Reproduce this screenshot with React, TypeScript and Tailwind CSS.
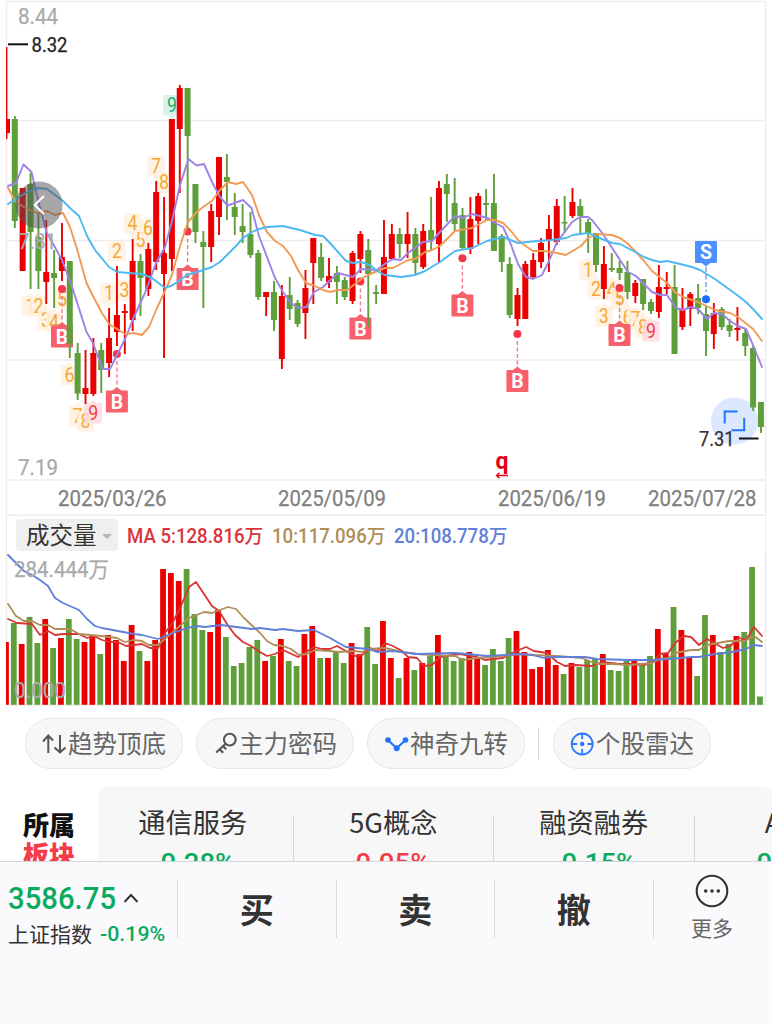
import React from "react";

type Candle = ["r" | "g", number, number, number, number];

// colour, high, low, body top, body bottom
const CANDLES: Candle[] = [
  ["r", 47, 139, 119, 133], ["g", 116, 228, 119, 221], ["r", 188, 271, 188, 271], ["g", 173, 289, 184, 232],
  ["g", 212, 289, 237, 271], ["r", 220, 304, 272, 282], ["g", 250, 308, 273, 278], ["r", 223, 281, 257, 271],
  ["g", 261, 358, 261, 344], ["g", 343, 400, 353, 393.5], ["r", 350, 404, 388, 394], ["r", 338, 396, 353, 394],
  ["g", 343, 393, 350, 370], ["r", 308, 377, 338, 363], ["r", 266, 346, 315, 332], ["r", 304, 354, 311, 313],
  ["r", 239, 331, 261, 320], ["g", 254, 316, 261, 278], ["r", 243, 296, 249, 289], ["r", 181, 270, 192, 262],
  ["r", 197, 358, 253, 274], ["r", 119, 271, 119, 259], ["r", 85, 193, 88, 129], ["g", 88, 230, 88, 136],
  ["g", 184, 243, 184, 232], ["g", 231, 308, 242, 247], ["r", 204, 262, 211, 247], ["r", 157, 235, 157, 217],
  ["g", 154, 220, 177, 182], ["g", 193, 235, 207, 217], ["g", 204, 243, 226, 232], ["g", 212, 258, 234, 255],
  ["g", 250, 300, 253, 297], ["r", 292, 316, 292, 297], ["g", 281, 331, 292, 320], ["r", 285, 369, 296, 359],
  ["g", 277, 320, 295, 309], ["g", 300, 327, 303, 324], ["r", 270, 339, 288, 313], ["r", 238, 304, 238, 263],
  ["g", 243, 281, 257, 278], ["r", 258, 288, 276, 282], ["g", 266, 304, 273, 282], ["g", 277, 300, 280, 297],
  ["r", 251, 304, 253, 301], ["r", 231, 273, 234, 259], ["g", 239, 327, 250, 274], ["g", 285, 304, 292, 294],
  ["r", 220, 294, 257, 294], ["r", 224, 260, 234, 259], ["g", 228, 258, 234, 244], ["r", 212, 258, 234, 244],
  ["g", 228, 274, 234, 263], ["r", 224, 269, 231, 267], ["g", 197, 250, 230, 240], ["r", 181, 263, 188, 244],
  ["g", 174, 222, 184, 194], ["g", 178, 231, 203, 224], ["g", 208, 250, 215, 248], ["r", 197, 254, 219, 249],
  ["r", 193, 244, 196, 221], ["g", 189, 220, 203, 205], ["g", 174, 251, 203, 251], ["g", 234, 272, 236, 262],
  ["g", 257, 318, 264, 315], ["r", 288, 326, 295, 319], ["r", 261, 319, 264, 319], ["r", 253, 278, 260, 277],
  ["r", 238, 268, 243, 262], ["r", 215, 272, 229, 241], ["r", 199, 245, 206, 242], ["g", 196, 233, 222, 223.5],
  ["r", 188, 218, 202, 216], ["g", 199, 233, 206, 216], ["g", 219, 253, 222, 234], ["g", 233, 272, 233, 265],
  ["r", 246, 299, 264, 289], ["g", 253, 272, 268, 270], ["g", 261, 280, 268, 273], ["g", 261, 299, 272, 292],
  ["r", 280, 303, 283, 296], ["g", 279, 310, 279, 304], ["g", 299, 314, 302, 311], ["r", 265, 318, 287, 312],
  ["r", 272, 294, 287, 289], ["g", 265, 354, 287, 354], ["r", 288, 330, 309, 327], ["r", 292, 326, 294, 309],
  ["g", 284, 314, 298, 308], ["g", 305, 356, 314, 331], ["r", 303, 349, 313, 334], ["g", 307, 330, 309, 327],
  ["g", 319, 337, 325, 331], ["r", 307, 341, 328, 330], ["g", 329, 356, 333, 346], ["g", 345, 411, 348, 407.5],
  ["g", 402, 433, 402, 427],
];

const VOLUME_TOPS = [
  642, 623, 644, 617, 643, 619, 648, 638, 619, 639, 642, 636, 654, 635, 640, 661, 625, 651, 661, 640, 569, 573, 581,
  569, 614, 630, 632, 610, 637, 666, 663, 647, 640, 661, 656, 639, 661, 666, 634, 626, 658, 658, 652, 663, 643, 654,
  627, 664, 621, 658, 678, 658, 670, 663, 656, 635, 657, 661, 658, 652, 658, 665, 649, 661, 638, 631, 652, 669, 667,
  650, 665, 674, 663, 667, 660, 659, 654, 670, 671, 661, 661, 663, 656, 629, 653, 607, 630, 658, 676, 615, 635, 652,
  644, 636, 632, 567, 696.5,
];
const VOLUME_RED = new Set([
  0, 2, 5, 7, 10, 11, 13, 14, 15, 16, 18, 19, 20, 21, 22, 26, 27, 33, 35, 38, 39, 41, 44, 45, 48, 49, 51, 53, 55, 59,
  60, 65, 66, 67, 68, 69, 70, 72, 76, 80, 83, 84, 86, 87, 90, 93,
]);

const MA_SHORT =
  "8,186 16,183 23.5,164.5 31.5,172 38,200 46.5,232 62,260 71.5,285 86.5,332 93,343 102.5,369 110,369 117,355 126,337 133,319 145,293 156,263 165,247 172,221 180,185 188.5,159 196.5,165.5 204,164 212,182 220,197 227.5,205.5 243,200 251.5,208 259,236 275,278 283,292 291,303 298,308 306.5,307 314,292 323,287 338,273 353,277 361,269 377,270 386,263 393,259 401,260 408,253 423,242 432,241 440,232 455,216 463,218 472,214 480,216 488,218 495,223 503,227 510,242 518,264 526,277 533,279 542,275 549,261 557,242 564,233 572,222 580,217 588,217 592,220 603,234 620,260 628,272 636,276 652,292 660,295 667,295 676,308 683,310 691,307 698,309 707,319 714,313 722,314 730,321 738,326 746,329 753,345 762,367";
const MA_MID =
  "8,188 16,202 24,207 38,213.5 47,211 55,215 63,213 70,227 77,249 86.5,283 94,298 102,313 109,324 125,334 134,333 142,335 149,327 157,308 164,293 172,275 180,246 188,222 197,212 203,207 212,201 220,190 228,182 236,184 243,182 252,195 259,215 267,232 275,241 283,246 291,256 298,270 306,283 315,286 323,290 330,292 338,290 347,290 355,284 361,279 370,274 385,268 393,268 408,260 415,259 425,252 432,250 440,246 455,231 472,228 487,220 495,220 503,223 511,231 518,240 527,247 533,251 543,251 552,252 566,255 581,246 588,238 597,234 612,235 620,238 627,243 637,253 644,261 652,271 667,283 676,293 683,297 698,302 715,310 730,313 738,317 753,329 762,341";
const MA_LONG =
  "8,204 16,199 24,194 32,190 39,188 47,189 55,195 63,201 71,209 79,216 87,236 95,250 109,267 117,272 142,274 152,278 165,288 173,285 187,275 200,271 212,267 220,262 228,254 236,246 243,238 252,232 259,229 267,227 283,226 300,230 315,235 323,236 330,243 346,261 353,263 361,262 370,265 377,271 385,275 401,277 415,275 425,271 440,262 455,251 472,248 487,241 503,237 518,243 527,242 537,241 552,240 566,238 573,235 588,233 597,237 612,243 620,244 637,253 644,257 652,260 660,262 667,261 676,263 692,267 700,270 715,279 737,295 746,302 753,309 762,319";

const VOL_MA5 =
  "8,619 17,623 32,624 40,635 48,631 55,635 63,634 79,634 87,638 94,636 102,640 110,642 118,642 126,646 142,644 150,648 158,648 165,633 173,622 181,606 189,587 196,582 204,594 212,606 219,611 227,624 235,635 243,642 251,646 260,652 267,656 275,654 283,650 298,657 314,647 322,649 330,649 337,646 355,656 362,655 370,648 377,651 385,643 393,646 402,651 408,657 417,658 424,666 432,665 440,657 460,654 477,657 485,660 493,659 503,658 512,653 519,650 526,647 534,651 547,653 557,662 565,666 575,665 592,666 602,662 619,664 632,664 645,665 654,661 660,654 668,653 675,643 684,636 691,637 699,645 707,639 723,648 730,646 739,638 746,640 754,627 762,636";
const VOL_MA10 =
  "8,604 16,616 24,621 32,621 40,625 48,625 55,629 70,629 79,634 102,636 117,638 125,642 133,640 142,641 149,645 158,645 166,638 173,632 182,624 189,618 204,612 212,613 228,607 236,609 244,618 260,633 267,641 274,645 283,646 291,649 299,655 307,654 315,650 330,651 338,652 354,651 362,652 368,649 385,648 402,652 417,654 432,655 455,656 463,660 477,658 493,657 520,654 534,655 557,656 582,658 597,664 612,664 630,665 652,663 660,659 669,658 675,653 691,650 699,650 707,645 729,641 745,641 754,636 762,642";
const VOL_MA20 =
  "8,555 15,562 24,571 32,575 40,580 48,586 55,598 63,603 79,610 87,619 95,626 102,628 118,631 134,634 142,635 158,639 173,633 189,627.5 197,626 205,627 221,625 252,629 260,628 275,630 283,629 298,631 314,630 330,638 337,642 346,647 368,649 377,652 393,651 417,654 455,653 467,654 487,656 520,654 532,655 544,658 552,657 585,657 597,659 629,660 652,660 669,659 691,657 699,657 715,654 732,652 746,649 754,645 762,646";

const RED = "#eb0000";
const GREEN = "#5f9f3b";
const STEP = 7.854;

type Tag = { t: string; x: number; y: number; down?: boolean; kind?: "green" | "red" };

const TAGS: Tag[] = [
  { t: "1", x: 109, y: 293, down: true },
  { t: "2", x: 117, y: 251, down: true },
  { t: "3", x: 124.5, y: 290, down: true },
  { t: "4", x: 132.5, y: 223, down: true },
  { t: "5", x: 140.5, y: 240, down: true },
  { t: "6", x: 148, y: 228, down: true },
  { t: "7", x: 156, y: 166, down: true },
  { t: "8", x: 164, y: 182, down: true },
  { t: "9", x: 172, y: 105, down: true, kind: "green" },
  { t: "1", x: 30.5, y: 306 },
  { t: "2", x: 38.5, y: 306 },
  { t: "3", x: 46, y: 320 },
  { t: "4", x: 54, y: 322 },
  { t: "5", x: 62, y: 299 },
  { t: "6", x: 69.5, y: 375 },
  { t: "7", x: 77.5, y: 416 },
  { t: "8", x: 85.5, y: 421 },
  { t: "9", x: 93.2, y: 413, kind: "red" },
  { t: "1", x: 588, y: 270 },
  { t: "2", x: 596, y: 289 },
  { t: "3", x: 603.7, y: 316 },
  { t: "4", x: 611.5, y: 290 },
  { t: "5", x: 619.5, y: 298 },
  { t: "6", x: 627.4, y: 317 },
  { t: "7", x: 635.3, y: 319 },
  { t: "8", x: 643, y: 327 },
  { t: "9", x: 651, y: 331, kind: "red" },
];

function CountTag({ t, x, y, down, kind }: Tag) {
  const bg = kind === "green" ? "#d3f1e4" : kind === "red" ? "#ffdcdf" : "#fff1e2";
  const fg = kind === "green" ? "#1fae6c" : kind === "red" ? "#f0404f" : "#f5a831";
  const tip = down
    ? `M${x - 4} ${y + 9.5}L${x} ${y + 13}L${x + 4} ${y + 9.5}z`
    : `M${x - 4} ${y - 9.5}L${x} ${y - 13}L${x + 4} ${y - 9.5}z`;
  return (
    <g>
      <g fill={bg} opacity={0.85}>
        <rect x={x - 8.7} y={y - 10} width={17.4} height={20.5} rx={1} />
        <path d={tip} />
      </g>
      <text x={x - 5} y={y + 7.2} fontSize={20} fill={fg} textLength={10} lengthAdjust="spacingAndGlyphs">
        {t}
      </text>
    </g>
  );
}

const BUYS = [
  { x: 62, dot: 289, top: 325.5 },
  { x: 116.9, dot: 354, top: 390.5 },
  { x: 187.6, dot: 231.5, top: 268 },
  { x: 360.4, dot: 281.5, top: 317.5 },
  { x: 462.4, dot: 258.3, top: 294.5 },
  { x: 517.4, dot: 334, top: 370 },
  { x: 619.5, dot: 288, top: 324 },
];

function Buy({ x, dot, top }: { x: number; dot: number; top: number }) {
  return (
    <g>
      <path d={`M${x} ${dot + 7}V${top - 4}`} stroke="#ef7f89" strokeWidth={1.4} strokeDasharray="4 2.5" />
      <circle cx={x} cy={dot} r={4} fill="#f5354a" />
      <path d={`M${x - 5} ${top + 0.5}L${x} ${top - 3.5}L${x + 5} ${top + 0.5}z`} fill="#f8606c" />
      <rect x={x - 11} y={top} width={22} height={22} rx={1} fill="#f8606c" />
      <text x={x} y={top + 18} fontSize={19.5} fontWeight={700} fill="#fff" textAnchor="middle">
        B
      </text>
    </g>
  );
}

function Line({ points, color, w = 1.9 }: { points: string; color: string; w?: number }) {
  return <polyline points={points} fill="none" stroke={color} strokeWidth={w} strokeLinejoin="round" strokeLinecap="round" />;
}

function Fit({ x, y, w, size, fill, children }: { x: number; y: number; w: number; size: number; fill: string; children: string }) {
  return (
    <text x={x} y={y} fontSize={size} fill={fill} stroke={fill} strokeWidth={0.25} textLength={w} lengthAdjust="spacingAndGlyphs">
      {children}
    </text>
  );
}

function PriceChart() {
  return (
    <svg width="772" height="516" viewBox="0 0 772 516" className="block shrink-0 font-[Roboto,'Noto_Sans_CJK_SC',sans-serif]">
      <g stroke="#ededed" strokeWidth={1.5}>
        <path d="M6 1.5H766M6 120.5H766M6 240.5H766M6 360H766M6 480H766M6 515.3H766M6.5 1V516M765.5 1V516" fill="none" />
      </g>
      {TAGS.map((t, i) => (
        <CountTag key={i} {...t} />
      ))}
      {BUYS.map((b) => (
        <Buy key={b.x} {...b} />
      ))}
      <g>
        <path d="M706 267V292" stroke="#7fabf5" strokeWidth={1.6} strokeDasharray="5 2.5" />
        <circle cx={706} cy={299.3} r={4} fill="#1a6dff" />
        <rect x={695} y={241} width={22} height={22} rx={1} fill="#4d90ff" />
        <path d="M701 262.5L706 266.5L711 262.5z" fill="#4d90ff" />
        <text x={706} y={258.7} fontSize={19.5} fontWeight={700} fill="#fff" textAnchor="middle">
          S
        </text>
      </g>
      <circle cx={734.5} cy={421} r={23.6} fill="#dce8ff" />
      {CANDLES.map(([c, hi, lo, top, bot], i) => {
        const x = 6.95 + STEP * i;
        const color = c === "r" ? RED : GREEN;
        return (
          <g key={i} fill={color}>
            <rect x={i === 0 ? 6 : x - 0.9} y={hi} width={i === 0 ? 1.4 : 1.9} height={lo - hi} />
            <rect x={i === 0 ? 6 : x - 3} y={top} width={i === 0 ? 4 : 6} height={bot - top} />
          </g>
        );
      })}
      <Line points={MA_SHORT} color="#9d83e8" />
      <Line points={MA_MID} color="#f29a55" />
      <Line points={MA_LONG} color="#4db8f2" />

      <circle cx={39} cy={205} r={23.6} fill="#505050" fillOpacity={0.5} />
      <path d="M44 196L34.7 205L44 214" fill="none" stroke="#fff" strokeWidth={2} />
      <Fit x={18} y={23.5} w={40} size={22} fill="#a9a9a9">8.44</Fit>
      <Fit x={18.5} y={249} w={38} size={22} fill="#a9a9a9">7.81</Fit>
      <Fit x={18} y={474.5} w={40} size={22} fill="#a9a9a9">7.19</Fit>
      <path d="M8 44.3H28" stroke="#111" strokeWidth={2} />
      <Fit x={31.5} y={52} w={36} size={20} fill="#222">8.32</Fit>
      <path d="M739 438.5H758.5" stroke="#111" strokeWidth={2} />
      <Fit x={699} y={446} w={35.5} size={20} fill="#333">7.31</Fit>
      <path d="M724.7 423.5V411.5H737.5M744.2 418V430.3H731.5" fill="none" stroke="#1f73ff" strokeWidth={2} />
      <text x={502} y={469} fontSize={23} fontWeight={700} fill="#e60012" textAnchor="middle">
        q
      </text>
      <path d="M508 475.5H496.5M499.5 472.8L496.5 475.5L499.5 478.2" fill="none" stroke="#e60012" strokeWidth={1.4} />
      <Fit x={58} y={506} w={108.5} size={22} fill="#808080">2025/03/26</Fit>
      <Fit x={278} y={506} w={108} size={22} fill="#808080">2025/05/09</Fit>
      <Fit x={498} y={506} w={108} size={22} fill="#808080">2025/06/19</Fit>
      <Fit x={648} y={506} w={108.5} size={22} fill="#808080">2025/07/28</Fit>
    </svg>
  );
}

function VolumeChart() {
  return (
    <svg width="772" height="154" viewBox="0 552 772 154" className="block shrink-0 font-[Roboto,'Noto_Sans_CJK_SC',sans-serif]">
      <path d="M6.5 552V705M765.5 552V705M6 705H766" fill="none" stroke="#ededed" strokeWidth={1.5} />
      {VOLUME_TOPS.map((top, i) => {
        const x = 5.95 + STEP * i;
        const left = Math.max(6, x - 2.9);
        return (
          <rect key={i} x={left} y={top} width={x + 2.9 - left} height={704.8 - top} fill={VOLUME_RED.has(i) ? RED : GREEN} />
        );
      })}
      <Line points={VOL_MA5} color="#d83434" w={1.8} />
      <Line points={VOL_MA10} color="#b08d57" w={1.8} />
      <Line points={VOL_MA20} color="#5f7fd9" w={1.8} />
      <Fit x={14} y={577} w={95} size={21.5} fill="#aaaaaa">284.444万</Fit>
      <Fit x={14} y={697.5} w={52} size={21.5} fill="#aaaaaa">0.000</Fit>
    </svg>
  );
}

function Pill({ icon, children }: { icon: React.ReactNode; children: string }) {
  return (
    <div className="box-border flex h-[51px] w-[158px] shrink-0 items-center rounded-full border border-[#e6e6e6] bg-[#f7f7f7] pl-4 text-[24.5px] leading-none text-[#666]">
      <span className="flex w-[26px] shrink-0 items-center">{icon}</span>
      <span className="whitespace-nowrap">{children}</span>
    </div>
  );
}

function Sector({ name, pct, color }: { name: string; pct: string; color: string }) {
  return (
    <div className="flex w-[199.5px] shrink-0 flex-col items-center">
      <div className="whitespace-nowrap pt-[18px] text-[27.2px] leading-[32px] text-[#333]">{name}</div>
      <div className={`mt-[13px] origin-center scale-x-[1.1] whitespace-nowrap font-[Roboto] text-[25px] font-medium leading-[28px] ${color}`}>{pct}</div>
    </div>
  );
}

function TradeButton({ children }: { children: string }) {
  return (
    <button className="flex h-[58px] w-[158.5px] shrink-0 items-center justify-center border-l border-[#d9d9de] text-[34px] font-bold leading-none text-[#333]">
      {children}
    </button>
  );
}

export default function App() {
  return (
    <div className="flex h-[1024px] w-[772px] flex-col overflow-hidden bg-white font-['Noto_Sans_CJK_SC',sans-serif]">
      <PriceChart />

      <div className="mx-[6px] flex h-[36px] w-[760px] shrink-0 items-start border-x border-[#ededed] pl-[9px] pt-[3px]">
        <div className="flex h-[32px] w-[102px] shrink-0 items-center rounded bg-[#efefef] pb-px pl-[10px] text-[23.5px] leading-none text-[#333]">
          成交量
          <span className="ml-[5px] mt-1 border-x-[5px] border-t-[5px] border-x-transparent border-t-[#b5b5b5]" />
        </div>
        <div className="flex h-[36px] items-center whitespace-nowrap pl-[9px] font-[Roboto,'Noto_Sans_CJK_SC',sans-serif] text-[19.5px] font-medium leading-none">
          <span className="w-[145px] shrink-0 text-[#d8343a]"><span className="inline-block origin-left scale-x-[0.955]">MA 5:128.816万</span></span>
          <span className="w-[122px] shrink-0 text-[#b08d57]"><span className="inline-block origin-left scale-x-[0.955]">10:117.096万</span></span>
          <span className="shrink-0 text-[#5f7fd9]"><span className="inline-block origin-left scale-x-[0.955]">20:108.778万</span></span>
        </div>
      </div>

      <VolumeChart />

      <div className="flex shrink-0 items-center gap-[13px] pl-[25px] pt-[12px]">
        <Pill
          icon={
            <svg width="26" height="24" viewBox="0 0 26 24" fill="none" stroke="#555" strokeWidth="2">
              <path d="M6.3 21V3.5M1 9.5L6.3 3.5L11 8.5M18 3V20.5M12.5 15.5L18 20.5L23.5 15.5" />
            </svg>
          }
        >
          趋势顶底
        </Pill>
        <Pill
          icon={
            <svg width="26" height="24" viewBox="0 0 26 24" fill="none" stroke="#555" strokeWidth="2.1">
              <circle cx="16.8" cy="7.6" r="5.9" />
              <path d="M12.6 11.8L3.2 20.6M6.6 17.2L10.2 20.8M10 14L13.2 17.4" />
            </svg>
          }
        >
          主力密码
        </Pill>
        <Pill
          icon={
            <svg width="26" height="24" viewBox="0 0 26 24" fill="none" stroke="#1f73ff" strokeWidth="2">
              <path d="M4 8L12.7 16.3L21.5 8" />
              <g fill="#1f73ff" stroke="none">
                <circle cx="4" cy="8" r="2.8" />
                <circle cx="12.7" cy="16.3" r="3" />
                <circle cx="21.5" cy="8" r="2.8" />
              </g>
            </svg>
          }
        >
          神奇九转
        </Pill>
        <div className="flex items-center gap-[14px]">
          <div className="h-[33px] w-px bg-[#dcdcdc]" />
          <Pill
            icon={
              <svg width="26" height="24" viewBox="0 0 26 24" fill="none" stroke="#2a78ff" strokeWidth="1.8">
                <circle cx="12.2" cy="12" r="10.5" />
                <path d="M12.2 2V7M12.2 17V22M2 12H7M17.4 12H22.6" />
                <circle cx="12.2" cy="12" r="2.2" fill="#2a78ff" stroke="none" />
              </svg>
            }
          >
            个股雷达
          </Pill>
        </div>
      </div>

      <div className="flex h-[92px] shrink-0 overflow-hidden pt-[18px]">
        <div className="w-[98px] shrink-0 pl-[23px] pt-[22px] text-[26px] font-black leading-[30px]">
          <div className="text-[#111]">所属</div>
          <div className="text-[#f43b47]">板块</div>
        </div>
        <div className="flex w-[674px] shrink-0 overflow-hidden rounded-t-lg bg-[#f7f7f7]">
          <div className="-ml-[5px] flex">
            <Sector name="通信服务" pct="-0.28%" color="text-[#0aaa60]" />
            <div className="mt-[29px] w-px shrink-0 bg-[#d5d5d5]" />
            <Sector name="5G概念" pct="0.05%" color="text-[#f43b47]" />
            <div className="mt-[29px] w-px shrink-0 bg-[#d5d5d5]" />
            <Sector name="融资融券" pct="-0.15%" color="text-[#0aaa60]" />
            <div className="mt-[29px] w-px shrink-0 bg-[#d5d5d5]" />
            <Sector name="AIPC" pct="0.42%" color="text-[#0aaa60]" />
          </div>
        </div>
      </div>

      <div className="flex flex-1 items-start border-t border-[#d6d6da] bg-[#fafafd] pt-[18px]">
        <div className="w-[177px] shrink-0 pl-[8px]">
          <div className="flex items-center text-[#0aaa60]">
            <span className="w-[115px] shrink-0 font-[Roboto] text-[31.5px] font-medium leading-[38px]">
              <span className="inline-block origin-left scale-x-[0.93]">3586.75</span>
            </span>
            <svg width="16" height="12" viewBox="0 0 16 12" fill="none" stroke="#333" strokeWidth="1.9" className="-mt-[3px]">
              <path d="M1.5 10L8 3L14.5 10" />
            </svg>
          </div>
          <div className="-mt-[2px] flex h-[34px] items-center whitespace-nowrap text-[21px] leading-none text-[#333]">
            <span className="w-[92px] shrink-0">上证指数</span>
            <span className="mt-[2px] inline-block origin-left scale-x-[1.04] font-[Roboto] text-[20.5px] font-medium text-[#0aaa60]">-0.19%</span>
          </div>
        </div>
        <TradeButton>买</TradeButton>
        <TradeButton>卖</TradeButton>
        <TradeButton>撤</TradeButton>
        <button className="flex h-[58px] w-[118px] shrink-0 flex-col items-center border-l border-[#d9d9de] text-[21px] leading-none text-[#666]">
          <svg width="36" height="36" viewBox="0 0 36 36" className="-mt-[7px] shrink-0">
            <circle cx="18" cy="18" r="15.3" fill="none" stroke="#333" strokeWidth="2.1" />
            <g fill="#333">
              <circle cx="11.7" cy="18" r="1.8" />
              <circle cx="18" cy="18" r="1.8" />
              <circle cx="24.3" cy="18" r="1.8" />
            </g>
          </svg>
          <span className="mt-[8px]">更多</span>
        </button>
      </div>
    </div>
  );
}
